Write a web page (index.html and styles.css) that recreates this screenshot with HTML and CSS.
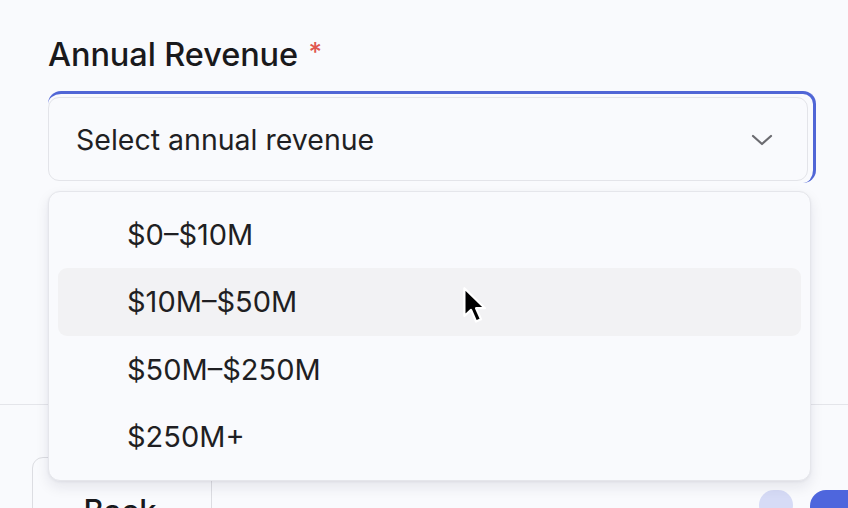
FILE: index.html
```html
<!DOCTYPE html>
<html>
<head>
<meta charset="utf-8">
<link rel="stylesheet" href="styles.css">
</head>
<body>
<div class="page">
  <div class="field">
    <div class="label">Annual Revenue <span class="req">*</span></div>
    <div class="select-wrap">
      <div class="focus-ring">
        <div class="select">
          <span class="placeholder">Select annual revenue</span>
          <svg class="chev" width="22" height="12" viewBox="0 0 22 12"><path d="M2 2 L11 10 L20 2" fill="none" stroke="#6b6b70" stroke-width="2.2" stroke-linecap="round" stroke-linejoin="round"/></svg>
        </div>
      </div>
      <ul class="menu">
        <li class="opt">$0–$10M</li>
        <li class="opt hover">$10M–$50M</li>
        <li class="opt">$50M–$250M</li>
        <li class="opt">$250M+</li>
      </ul>
    </div>
  </div>
  <div class="footer">
    <button class="back">Back</button>
    <div class="right">
      <span class="pill"></span>
      <span class="next"></span>
    </div>
  </div>
  <svg class="cursor" width="27" height="40" viewBox="0 0 24 36">
    <path d="M2 2 L2 27 L8 21.5 L12.5 32 L17 30 L12.5 20 L20.5 20 Z" fill="#000" stroke="#fff" stroke-width="2" stroke-linejoin="round"/>
  </svg>
</div>
</body>
</html>
```
FILE: styles.css
```css
* { box-sizing: border-box; }
html, body { margin: 0; padding: 0; }
body {
  background: #f9fafd;
  font-family: Inter, "Noto Sans", sans-serif;
  color: #1d1d21;
  width: 848px;
  height: 508px;
  overflow: hidden;
}
.page {
  position: relative;
  width: 848px;
  height: 508px;
  overflow: hidden;
}
.field {
  padding: 34px 0 0 48px;
  height: 404px;
}
.label {
  font-size: 32.5px;
  font-weight: 500;
  line-height: 42px;
  height: 42px;
  color: #19191c;
  letter-spacing: -0.1px;
}
.req {
  color: #e0574f;
  font-size: 26px;
  line-height: 0;
  vertical-align: 5px;
  margin-left: 2px;
}
.select-wrap {
  position: relative;
  margin-top: 15px;
  width: 768px;
}
.focus-ring {
  border-top: 3px solid #5066d6;
  border-right: 3px solid #5066d6;
  border-radius: 13px;
  padding: 3px 5px 2px 0;
}
.select {
  height: 84px;
  border: 1.5px solid #e3e4e9;
  border-radius: 11px;
  background: #f9fafd;
  display: flex;
  align-items: center;
  justify-content: space-between;
  padding: 0 34px 0 27px;
  font-size: 28.5px;
  color: #1f1f23;
}
.chev { margin-top: 2px; }
.menu {
  position: absolute;
  top: 100px;
  left: 0;
  width: 763px;
  margin: 0;
  padding: 9px 9px 10px;
  list-style: none;
  background: #f9fafd;
  border: 1.5px solid #e5e6eb;
  border-radius: 12px;
  box-shadow: 0 6px 14px rgba(20, 25, 50, 0.09), 0 1px 3px rgba(20, 25, 50, 0.05);
  z-index: 2;
}
.opt {
  height: 67.25px;
  display: flex;
  align-items: center;
  padding-left: 69px;
  font-size: 29px;
  color: #1f1f23;
  border-radius: 9px;
}
.opt.hover { background: #f2f2f4; }
.footer {
  border-top: 1.5px solid #e4e5ea;
  display: flex;
  justify-content: space-between;
  align-items: flex-start;
  padding: 52px 0 0 32px;
}
.back {
  width: 180px;
  height: 86px;
  border: 1.5px solid #dcdde2;
  border-radius: 11px;
  background: #f9fafd;
  font-family: Inter, "Noto Sans", sans-serif;
  font-size: 31px;
  font-weight: 500;
  color: #19191c;
  padding: 20px 4px 0 0;
}
.right {
  display: flex;
  gap: 17px;
  padding-top: 33px;
  margin-right: -40px;
}
.pill {
  width: 34px;
  height: 30px;
  border-radius: 15px;
  background: #d6dbf6;
}
.next {
  width: 78px;
  height: 40px;
  border-radius: 16px;
  background: #4e66dd;
}
.cursor {
  position: absolute;
  left: 462px;
  top: 286px;
  z-index: 5;
}
```
